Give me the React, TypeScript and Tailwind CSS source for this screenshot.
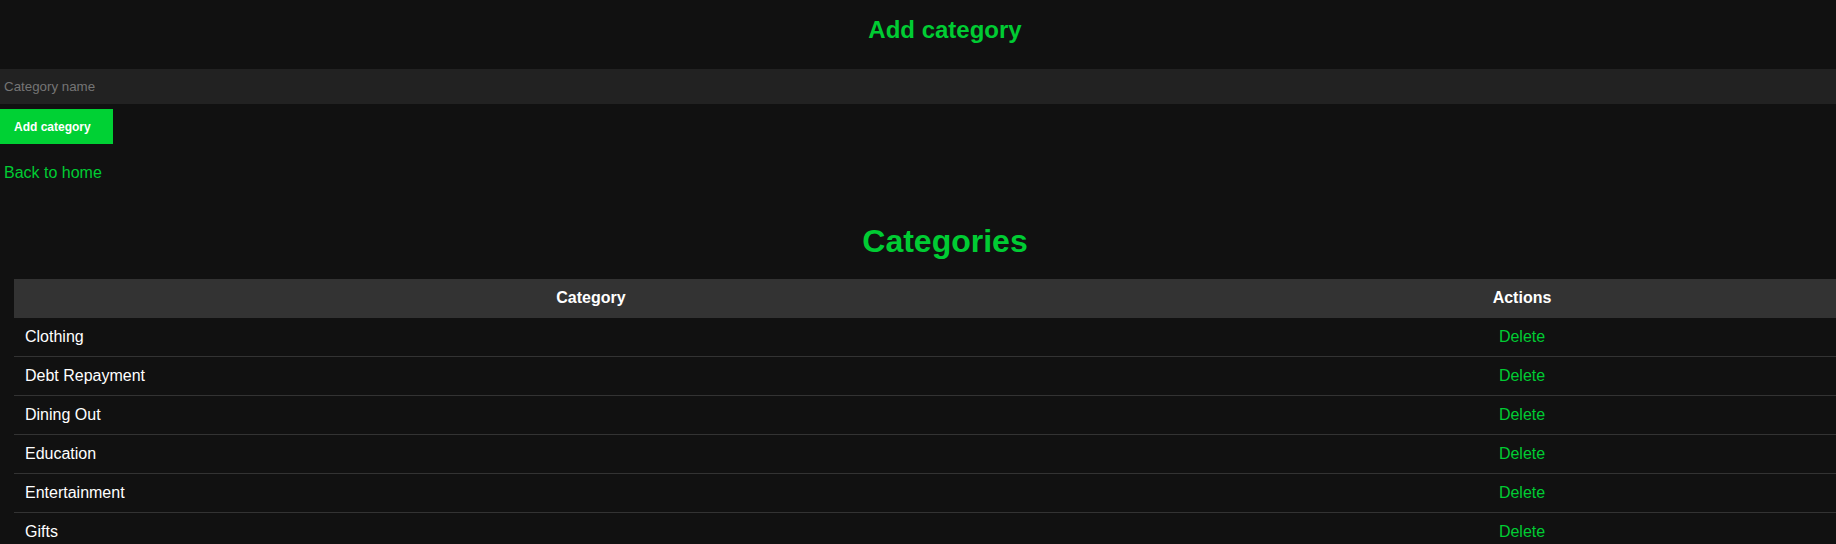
const categories = [
  'Clothing',
  'Debt Repayment',
  'Dining Out',
  'Education',
  'Entertainment',
  'Gifts',
]

export default function App() {
  return (
    <div className="min-h-screen w-full overflow-hidden bg-[#111] font-['Liberation_Sans',Arial,sans-serif]">
      <div className="w-[1890px]">
        <h2 className="mt-[16px] text-center text-[24px] font-bold leading-[27px] text-[#00cc33]">
          Add category
        </h2>
        <form className="mt-[26px]" onSubmit={(e) => e.preventDefault()}>
          <input
            type="text"
            placeholder="Category name"
            className="block h-[35px] w-full bg-[#222] px-[4px] text-[13.33px] text-white outline-none placeholder:text-[#757575]"
          />
          <button
            type="submit"
            className="mt-[5px] block h-[35px] w-[113px] bg-[#00d134] pl-[14px] text-left text-[12px] font-bold text-white"
          >
            Add category
          </button>
        </form>
        <a href="#" className="mt-[20px] block px-[4px] text-[16px] leading-[18px] text-[#00cc33]">
          Back to home
        </a>

        <h1 className="mt-[41px] text-center text-[32px] font-bold leading-[36px] text-[#00cc33]">
          Categories
        </h1>
        <table className="mx-[14px] mt-[20px] w-[1862px] border-collapse text-[16px] leading-[18px]">
          <thead>
            <tr className="bg-[#333] text-white">
              <th className="w-[1154px] border-b border-[#333] py-[10px] text-center font-bold">Category</th>
              <th className="border-b border-[#333] py-[10px] text-center font-bold">Actions</th>
            </tr>
          </thead>
          <tbody>
            {categories.map((name) => (
              <tr key={name} className="border-b border-[#333]">
                <td className="px-[11px] py-[10px] text-left text-white">{name}</td>
                <td className="py-[10px] text-center">
                  <a href="#" className="text-[#00cc33]">
                    Delete
                  </a>
                </td>
              </tr>
            ))}
          </tbody>
        </table>
      </div>
    </div>
  )
}
